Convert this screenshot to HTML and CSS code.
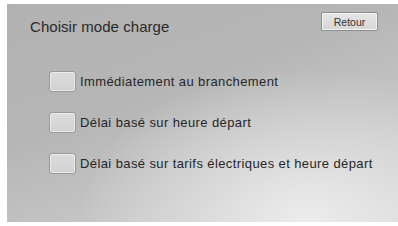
FILE: index.html
```html
<!DOCTYPE html>
<html lang="fr">
<head>
<meta charset="utf-8">
<link rel="stylesheet" href="styles.css">
</head>
<body>
<div class="screen">
  <div class="header">
    <h1 class="title">Choisir mode charge</h1>
    <button class="back">Retour</button>
  </div>
  <div class="options">
    <div class="option"><span class="box"></span><span class="label">Immédiatement au branchement</span></div>
    <div class="option"><span class="box"></span><span class="label">Délai basé sur heure départ</span></div>
    <div class="option"><span class="box"></span><span class="label">Délai basé sur tarifs électriques et heure départ</span></div>
  </div>
</div>
</body>
</html>
```
FILE: styles.css
```css
html, body {
  margin: 0;
  padding: 0;
  background: #ffffff;
}
body {
  width: 398px;
  height: 226px;
  padding: 4px 0 4px 7px;
  box-sizing: border-box;
  font-family: "Liberation Sans", Arial, sans-serif;
}
.screen {
  height: 218px;
  background:
    radial-gradient(ellipse 230px 150px at 300px 215px, #ececec 0%, rgba(230,230,230,0.6) 45%, rgba(200,200,200,0) 100%),
    linear-gradient(160deg, #b2b2b2 0%, #b6b6b6 40%, #c8c8c8 75%, #d6d6d6 100%);
  padding: 8px 20px 0 23px;
  box-sizing: border-box;
}
.header {
  display: flex;
  justify-content: space-between;
  align-items: flex-start;
}
.title {
  margin: 6px 0 0 0;
  font-size: 15px;
  font-weight: normal;
  color: #2a2a2a;
  letter-spacing: 0.05px;
}
.back {
  width: 57px;
  height: 19px;
  margin-top: 0;
  padding: 0;
  font-family: "Liberation Sans", Arial, sans-serif;
  font-size: 10.5px;
  color: #333;
  background: linear-gradient(#e6e6e6, #d6d6d6);
  border: 1px solid #8f8f8f;
  border-radius: 2px;
  box-shadow: inset 0 0 0 1px #f4f4f4;
}
.options {
  display: flex;
  flex-direction: column;
  gap: 20px;
  margin-top: 36px;
  padding-left: 19px;
}
.option {
  display: flex;
  align-items: center;
  gap: 4px;
}
.box {
  width: 27px;
  height: 21px;
  box-sizing: border-box;
  border: 1px solid #9a9a9a;
  border-radius: 3px;
  background: linear-gradient(#dcdcdc, #d2d2d2);
  box-shadow: inset 0 0 0 1px #ececec;
  flex: none;
}
.label {
  font-size: 13px;
  color: #262626;
  letter-spacing: 0.4px;
}
```
